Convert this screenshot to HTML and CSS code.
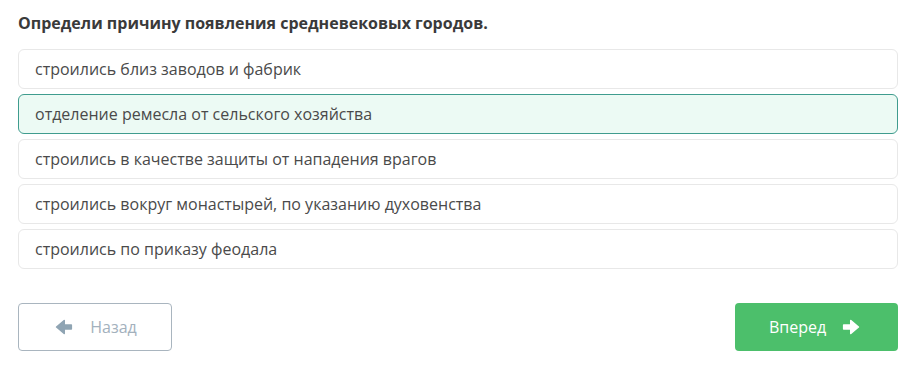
FILE: index.html
```html
<!DOCTYPE html>
<html lang="ru">
<head>
  <meta charset="UTF-8">
  <title>Вопрос</title>
  <link rel="stylesheet" href="styles.css">
</head>
<body>
  <div class="quiz">
    <div class="question">Определи причину появления средневековых городов.</div>

    <div class="options">
      <div class="option">строились близ заводов и фабрик</div>
      <div class="option selected">отделение ремесла от сельского хозяйства</div>
      <div class="option">строились в качестве защиты от нападения врагов</div>
      <div class="option">строились вокруг монастырей, по указанию духовенства</div>
      <div class="option">строились по приказу феодала</div>
    </div>

    <div class="nav">
      <button class="btn btn-back">
        <svg class="icon flip" viewBox="0 0 16 16"><path d="M1.5 6.2h6.3V2.3L14.6 8l-6.8 5.7V9.8H1.5z"/></svg>
        <span>Назад</span>
      </button>
      <button class="btn btn-next">
        <span>Вперед</span>
        <svg class="icon" viewBox="0 0 16 16"><path d="M1.5 6.2h6.3V2.3L14.6 8l-6.8 5.7V9.8H1.5z"/></svg>
      </button>
    </div>
  </div>
</body>
</html>
```

FILE: styles.css
```css
body {
  margin: 0;
  padding: 0;
  font-family: "Open Sans", Arial, sans-serif;
  background-color: #fff;
  color: #444;
}

.quiz {
  padding: 12px 4px 0 18px;
  width: 880px;
}

.question {
  font-size: 16px;
  font-weight: bold;
  color: #3a3a3a;
  line-height: 22px;
  margin-bottom: 15px;
}

.options {
  display: flex;
  flex-direction: column;
  gap: 5px;
}

.option {
  height: 38px;
  line-height: 38px;
  padding: 0 16px;
  border: 1px solid #e8e8e8;
  border-radius: 6px;
  font-size: 16px;
  color: #4a4a4a;
  background-color: #fff;
}

.option.selected {
  background-color: #ecfaf4;
  border-color: #3f9c8e;
}

.nav {
  display: flex;
  justify-content: space-between;
  margin-top: 34px;
}

.btn {
  height: 48px;
  display: flex;
  align-items: center;
  justify-content: center;
  gap: 16px;
  border-radius: 4px;
  font-family: "Open Sans", Arial, sans-serif;
  font-size: 16px;
  cursor: pointer;
}

.btn-back {
  width: 154px;
  background-color: #fff;
  border: 1px solid #a9b5bf;
  color: #a3b1bd;
  gap: 17px;
  padding-right: 4px;
}

.btn-next {
  width: 163px;
  background-color: #4cbf6b;
  border: none;
  color: #fff;
  padding-left: 2px;
}

.icon {
  width: 18px;
  height: 18px;
  fill: currentColor;
  stroke: currentColor;
  stroke-width: 1.4;
  stroke-linejoin: round;
  stroke-linecap: round;
}

.btn-back .icon {
  fill: #8fa4b3;
  stroke: #8fa4b3;
}

.flip {
  transform: scaleX(-1);
}
```
